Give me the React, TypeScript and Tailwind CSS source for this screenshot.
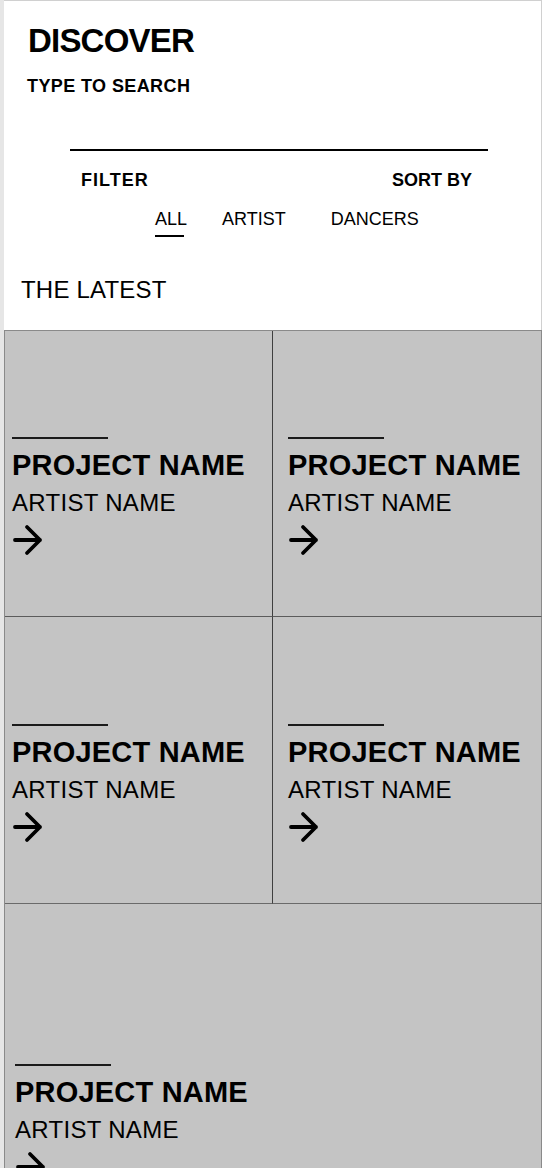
const font = { fontFamily: '"Liberation Sans", Arial, sans-serif' };

const Arrow = () => (
  <svg width="30" height="32" viewBox="0 0 30 32" fill="none" className="ml-[1px] mt-[9px] block">
    <path d="M2 16H27M14 3L27 16L14 29" stroke="#000" strokeWidth="3.8" strokeLinecap="round" strokeLinejoin="round" />
  </svg>
);

const ProjectCard = ({ className }: { className: string }) => (
  <div className={className}>
    <div className="h-[2px] w-[96px] bg-[#1a1a1a]" />
    <h3 className="mt-[12px] text-[29px] leading-[29px] font-bold tracking-[0.2px] text-black">PROJECT NAME</h3>
    <p className="mt-[11px] text-[24px] leading-[24px] tracking-[0.3px] text-black">ARTIST NAME</p>
    <Arrow />
  </div>
);

const App = () => {
  return (
    <div className="min-h-[1168px] bg-[#e6e6e6] pl-[4px]" style={font}>
      <div className="min-h-[1168px] bg-white border-t border-r border-[#d0d0d0]">
        <header className="flex flex-col pt-[23px]">
          <h1 className="ml-[24px] text-[33px] leading-[33px] font-bold tracking-[-0.8px] text-black">DISCOVER</h1>
          <p className="ml-[23px] mt-[20px] text-[18px] leading-[18px] font-bold tracking-[0.4px] text-black">TYPE TO SEARCH</p>
          <div className="ml-[66px] mt-[54px] h-[2px] w-[418px] bg-black" />
          <div className="ml-[77px] mt-[20px] flex w-[391px] justify-between text-[18px] leading-[18px] font-bold text-black">
            <span className="tracking-[1px]">FILTER</span>
            <span>SORT BY</span>
          </div>
          <nav className="ml-[151px] mt-[21px] flex items-start text-[18px] leading-[18px] text-black">
            <div className="flex flex-col">
              <span>ALL</span>
              <div className="mt-[7px] h-[2px] w-[29px] bg-black" />
            </div>
            <span className="ml-[35px]">ARTIST</span>
            <span className="ml-[45px]">DANCERS</span>
          </nav>
          <h2 className="ml-[17px] mt-[41px] text-[24px] leading-[24px] tracking-[0.2px] text-black">THE LATEST</h2>
        </header>

        <section className="mt-[28px] grid grid-cols-[268px_1fr] -mr-px border-t border-l border-[#8a8a8a] bg-[#c4c4c4]">
          <ProjectCard className="h-[286px] border-r border-b border-r-[#3f3f3f] border-b-[#5c5c5c] pl-[7px] pt-[106px]" />
          <ProjectCard className="h-[286px] border-r border-b border-r-[#8a8a8a] border-b-[#5c5c5c] pl-[15px] pt-[106px]" />
          <ProjectCard className="h-[287px] border-r border-b border-r-[#3f3f3f] border-b-[#6a6a6a] pl-[7px] pt-[107px]" />
          <ProjectCard className="h-[287px] border-r border-b border-r-[#8a8a8a] border-b-[#6a6a6a] pl-[15px] pt-[107px]" />
          <ProjectCard className="col-span-2 h-[300px] border-r border-[#8a8a8a] pl-[10px] pt-[160px]" />
        </section>
      </div>
    </div>
  );
};

export default App;
